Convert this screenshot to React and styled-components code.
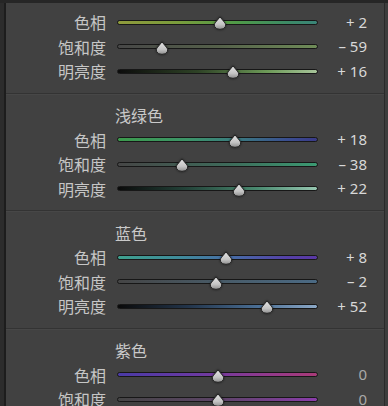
import React from "react";
import styled, { createGlobalStyle } from "styled-components";

const Global = createGlobalStyle`
  html, body { margin: 0; padding: 0; background: #404040; }
  * { box-sizing: border-box; }
`;

const Frame = styled.div`
  width: 388px;
  height: 406px;
  overflow: hidden;
  display: flex;
  background: #2b2b2b;
  border-top: 3px solid #262626;
`;

const Rail = styled.div`
  width: 4px;
  flex: none;
  background: #2c2c2c;
`;

const Panel = styled.div`
  flex: 1;
  display: flex;
  flex-direction: column;
  background: #414141;
  border-left: 2px solid #1d1d1d;
  border-right: 1px solid #2a2a2a;
  font-family: "Noto Sans CJK SC", "Noto Sans", sans-serif;
`;

const Gutter = styled.div`
  width: 3px;
  flex: none;
  background: #3d3d3d;
`;

const Section = styled.section`
  flex: none;
  padding: ${(p) => (p.$first ? "6.75px 0 9.5px" : "9.5px 0 9.5px")};
  border-top: ${(p) => (p.$first ? "none" : "1px solid #333333")};
  box-shadow: ${(p) => (p.$first ? "none" : "inset 0 1px 0 #474747")};
`;

const Header = styled.div`
  height: 24px;
  line-height: 24px;
  padding-left: 109px;
  font-size: 16px;
  color: #c9c9c9;
`;

const Row = styled.div`
  height: 24.5px;
  display: grid;
  grid-template-columns: 100px 201px 38px;
  column-gap: 11px;
  align-items: center;
`;

const Label = styled.div`
  text-align: right;
  font-size: 16px;
  line-height: 1;
  color: #c6c6c6;
`;

const Track = styled.div`
  position: relative;
  height: 5px;
  border-radius: 3px;
  border: 1px solid #171717;
  background: ${(p) => p.$bg};
`;

const Thumb = styled.svg`
  position: absolute;
  top: 50%;
  width: 13px;
  height: 14px;
  transform: translate(-50%, -42%);
  filter: drop-shadow(0 0 1px rgba(0, 0, 0, 0.6));
`;

const Value = styled.div`
  text-align: right;
  font-family: "Noto Sans", "Liberation Sans", sans-serif;
  font-size: 15px;
  line-height: 1;
  color: ${(p) => (p.$zero ? "#a9a9a9" : "#d8d8d8")};
  white-space: pre;
`;

const sections = [
  {
    title: null,
    rows: [
      { label: "色相", value: 2, bg: "linear-gradient(90deg, #8f9a3c 0%, #7a9c3c 30%, #4f9a48 60%, #3d8a66 85%, #3a8478 100%)" },
      { label: "饱和度", value: -59, bg: "linear-gradient(90deg, #474747 0%, #55604a 50%, #6f8c58 100%)" },
      { label: "明亮度", value: 16, bg: "linear-gradient(90deg, #0c0c0c 0%, #2e4226 40%, #6d9a58 75%, #a7c49a 100%)" },
    ],
  },
  {
    title: "浅绿色",
    rows: [
      { label: "色相", value: 18, bg: "linear-gradient(90deg, #3c9a4c 0%, #3c9468 35%, #3a7a80 60%, #3a4e90 85%, #3a3a88 100%)" },
      { label: "饱和度", value: -38, bg: "linear-gradient(90deg, #464646 0%, #3e6a5a 55%, #3b9a72 100%)" },
      { label: "明亮度", value: 22, bg: "linear-gradient(90deg, #0a0a0a 0%, #24443a 35%, #4a8a70 70%, #96c6b0 100%)" },
    ],
  },
  {
    title: "蓝色",
    rows: [
      { label: "色相", value: 8, bg: "linear-gradient(90deg, #3ea08e 0%, #3f8c9a 30%, #4868a6 60%, #5540a8 85%, #5a38a4 100%)" },
      { label: "饱和度", value: -2, bg: "linear-gradient(90deg, #454545 0%, #485a66 50%, #4b6a84 100%)" },
      { label: "明亮度", value: 52, bg: "linear-gradient(90deg, #0a0a0a 0%, #22344a 35%, #4a6e94 70%, #8ca8c6 100%)" },
    ],
  },
  {
    title: "紫色",
    rows: [
      { label: "色相", value: 0, bg: "linear-gradient(90deg, #4a3aa6 0%, #6a3aa2 40%, #923a8c 75%, #a83a78 100%)" },
      { label: "饱和度", value: 0, bg: "linear-gradient(90deg, #454545 0%, #5c4466 50%, #8a3caa 100%)" },
    ],
  },
];

function fmt(v) {
  if (v === 0) return "0";
  return v > 0 ? `+ ${v}` : `– ${Math.abs(v)}`;
}

function SliderThumb({ value, id }) {
  return (
    <Thumb viewBox="0 0 13 14" style={{ left: `${100 + value * 0.95}px` }}>
      <defs>
        <linearGradient id={id} x1="0" y1="0" x2="0" y2="1">
          <stop offset="0" stopColor="#e4e4e4" />
          <stop offset="0.6" stopColor="#c4c4c4" />
          <stop offset="1" stopColor="#8e8e8e" />
        </linearGradient>
      </defs>
      <path
        d="M6.5 0.8 L11.6 7 Q12.6 8.6 11.8 10.6 Q10.4 13.2 6.5 13.2 Q2.6 13.2 1.2 10.6 Q0.4 8.6 1.4 7 Z"
        fill={`url(#${id})`}
        stroke="#1e1e1e"
        strokeWidth="0.9"
      />
    </Thumb>
  );
}

export default function App() {
  return (
    <>
      <Global />
      <Frame>
        <Rail />
        <Panel>
          {sections.map((s, si) => (
            <Section key={si} $first={si === 0}>
              {s.title && <Header>{s.title}</Header>}
              {s.rows.map((r, ri) => (
                <Row key={ri}>
                  <Label>{r.label}</Label>
                  <Track $bg={r.bg}>
                    <SliderThumb value={r.value} id={`g${si}${ri}`} />
                  </Track>
                  <Value $zero={r.value === 0}>{fmt(r.value)}</Value>
                </Row>
              ))}
            </Section>
          ))}
        </Panel>
        <Gutter />
      </Frame>
    </>
  );
}
